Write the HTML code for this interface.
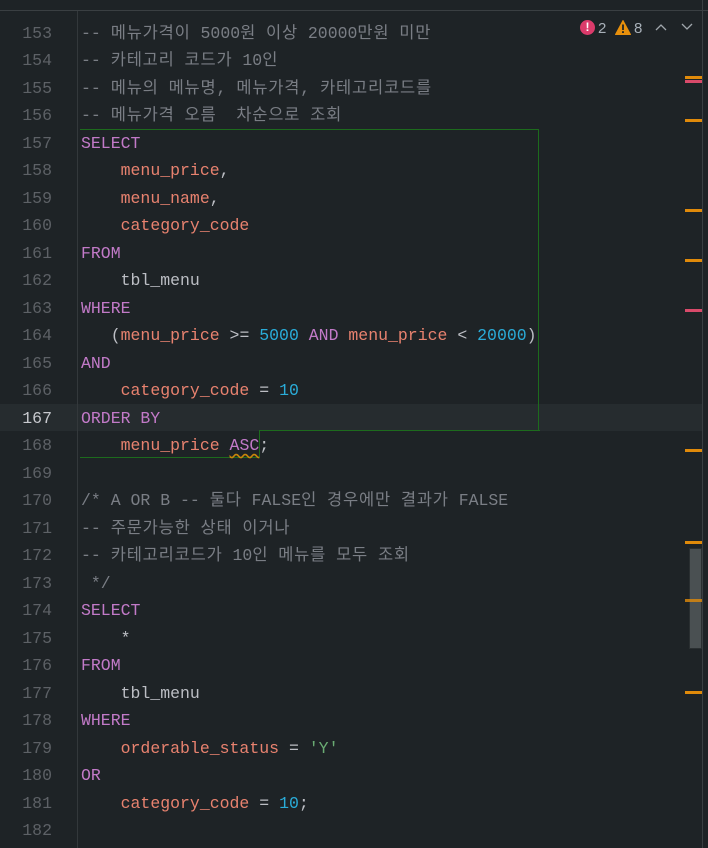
<!DOCTYPE html>
<html><head><meta charset="utf-8"><style>
body{margin:0;width:708px;height:848px;background:#1e2326;overflow:hidden;position:relative;font-family:"Liberation Mono","Noto Sans CJK KR",monospace;font-size:16.5px}
.top{position:absolute;left:0;top:0;width:708px;height:10px;border-bottom:1px solid #3a3f42;background:#1e2326}
.gut{position:absolute;left:77px;top:11px;width:1px;height:837px;background:#33383b}
.vb{position:absolute;left:702px;top:0;width:1px;height:848px;background:#3a3f42}
.ln{position:absolute;left:0;width:52px;text-align:right;color:#5d6166;height:27.5px;line-height:27.5px}
.cl{position:absolute;left:81px;height:27.5px;line-height:27.5px;white-space:pre;color:#bcbec4}
.k{letter-spacing:0.8px}
.c{color:#7a7e85}.kw{color:#c27ac8}.id{color:#e8826f}.n{color:#2aacd8}.s{color:#6aab73}.op{color:#bcbec4}
.mk{position:absolute;left:685px;width:17px;height:3px;background:#e08a0a}
</style></head><body>
<div class="top"></div>
<div style="position:absolute;left:0;top:404px;width:702px;height:27px;background:#262c2f"></div>
<div class="gut"></div>
<div class="vb"></div>
<div style="position:absolute;left:80px;top:129px;width:459px;height:301px;border:1px solid #1d6b1d;border-bottom:none;border-left:none;box-sizing:border-box"></div>
<div style="position:absolute;left:80px;top:129px;width:459px;height:1px;background:#1d6b1d"></div>
<div style="position:absolute;left:259px;top:430px;width:281px;height:1px;background:#1d6b1d"></div>
<div style="position:absolute;left:259px;top:430px;width:1px;height:27px;background:#1d6b1d"></div>
<div style="position:absolute;left:80px;top:457px;width:180px;height:1px;background:#1d6b1d"></div>

<div class="ln" style="top:19.5px">153</div><div class="cl c" style="top:19.5px">-- <span class="k">메뉴가격이</span> 5000<span class="k">원</span> <span class="k">이상</span> 20000<span class="k">만원</span> <span class="k">미만</span></div>
<div class="ln" style="top:47px">154</div><div class="cl c" style="top:47px">-- <span class="k">카테고리</span> <span class="k">코드가</span> 10<span class="k">인</span></div>
<div class="ln" style="top:74.5px">155</div><div class="cl c" style="top:74.5px">-- <span class="k">메뉴의</span> <span class="k">메뉴명</span>, <span class="k">메뉴가격</span>, <span class="k">카테고리코드를</span></div>
<div class="ln" style="top:102px">156</div><div class="cl c" style="top:102px">-- <span class="k">메뉴가격</span> <span class="k">오름</span>  <span class="k">차순으로</span> <span class="k">조회</span></div>
<div class="ln" style="top:129.5px">157</div><div class="cl kw" style="top:129.5px">SELECT</div>
<div class="ln" style="top:157px">158</div><div class="cl" style="top:157px">    <span class="id">menu_price</span>,</div>
<div class="ln" style="top:184.5px">159</div><div class="cl" style="top:184.5px">    <span class="id">menu_name</span>,</div>
<div class="ln" style="top:212px">160</div><div class="cl" style="top:212px">    <span class="id">category_code</span></div>
<div class="ln" style="top:239.5px">161</div><div class="cl kw" style="top:239.5px">FROM</div>
<div class="ln" style="top:267px">162</div><div class="cl" style="top:267px">    tbl_menu</div>
<div class="ln" style="top:294.5px">163</div><div class="cl kw" style="top:294.5px">WHERE</div>
<div class="ln" style="top:322px">164</div><div class="cl" style="top:322px">   (<span class="id">menu_price</span> &gt;= <span class="n">5000</span> <span class="kw">AND</span> <span class="id">menu_price</span> &lt; <span class="n">20000</span>)</div>
<div class="ln" style="top:349.5px">165</div><div class="cl kw" style="top:349.5px">AND</div>
<div class="ln" style="top:377px">166</div><div class="cl" style="top:377px">    <span class="id">category_code</span> = <span class="n">10</span></div>
<div class="ln" style="top:404.5px;color:#c8cacf">167</div><div class="cl kw" style="top:404.5px">ORDER BY</div>
<div class="ln" style="top:432px">168</div><div class="cl" style="top:432px">    <span class="id">menu_price</span> <span class="kw" style="text-decoration:underline wavy #c9860a;text-underline-offset:3px">ASC</span>;</div>
<div class="ln" style="top:459.5px">169</div>
<div class="ln" style="top:487px">170</div><div class="cl c" style="top:487px">/* A OR B -- <span class="k">둘다</span> FALSE<span class="k">인</span> <span class="k">경우에만</span> <span class="k">결과가</span> FALSE</div>
<div class="ln" style="top:514.5px">171</div><div class="cl c" style="top:514.5px">-- <span class="k">주문가능한</span> <span class="k">상태</span> <span class="k">이거나</span></div>
<div class="ln" style="top:542px">172</div><div class="cl c" style="top:542px">-- <span class="k">카테고리코드가</span> 10<span class="k">인</span> <span class="k">메뉴를</span> <span class="k">모두</span> <span class="k">조회</span></div>
<div class="ln" style="top:569.5px">173</div><div class="cl c" style="top:569.5px"> */</div>
<div class="ln" style="top:597px">174</div><div class="cl kw" style="top:597px">SELECT</div>
<div class="ln" style="top:624.5px">175</div><div class="cl" style="top:624.5px">    *</div>
<div class="ln" style="top:652px">176</div><div class="cl kw" style="top:652px">FROM</div>
<div class="ln" style="top:679.5px">177</div><div class="cl" style="top:679.5px">    tbl_menu</div>
<div class="ln" style="top:707px">178</div><div class="cl kw" style="top:707px">WHERE</div>
<div class="ln" style="top:734.5px">179</div><div class="cl" style="top:734.5px">    <span class="id">orderable_status</span> = <span class="s">'Y'</span></div>
<div class="ln" style="top:762px">180</div><div class="cl kw" style="top:762px">OR</div>
<div class="ln" style="top:789.5px">181</div><div class="cl" style="top:789.5px">    <span class="id">category_code</span> = <span class="n">10</span>;</div>
<div class="ln" style="top:817px">182</div>

<div style="position:absolute;left:580px;top:20px;width:15px;height:15px;border-radius:50%;background:#db3b6b;color:#fff;font:bold 12px 'Liberation Sans',sans-serif;text-align:center;line-height:15px">!</div>
<div style="position:absolute;left:598px;top:20px;color:#a8b0b8;font:15px 'Liberation Sans',sans-serif">2</div>
<svg style="position:absolute;left:615px;top:20px" width="16" height="15" viewBox="0 0 16 15"><path d="M8 0.5 L15.5 14.5 H0.5 Z" fill="#e8900c" stroke="#e8900c" stroke-linejoin="round"/><rect x="7.1" y="4.5" width="1.8" height="5.5" fill="#1e2326"/><rect x="7.1" y="11.2" width="1.8" height="1.8" fill="#1e2326"/></svg>
<div style="position:absolute;left:634px;top:20px;color:#a8b0b8;font:15px 'Liberation Sans',sans-serif">8</div>
<svg style="position:absolute;left:655px;top:23px" width="12" height="8"><path d="M1 7 L6 2 L11 7" fill="none" stroke="#a0a6ac" stroke-width="1.3"/></svg>
<svg style="position:absolute;left:681px;top:23px" width="12" height="8"><path d="M1 1 L6 6 L11 1" fill="none" stroke="#a0a6ac" stroke-width="1.3"/></svg>

<div class="mk" style="top:76px"></div>
<div class="mk" style="top:80px;background:#d94a6a"></div>
<div class="mk" style="top:119px"></div>
<div class="mk" style="top:209px"></div>
<div class="mk" style="top:259px"></div>
<div class="mk" style="top:309px;background:#d94a6a"></div>
<div class="mk" style="top:449px"></div>
<div class="mk" style="top:541px"></div>
<div style="position:absolute;left:689px;top:548px;width:11px;height:99px;background:#4a5052;border:1px solid #2a2f31"></div>
<div class="mk" style="top:599px;opacity:0.8"></div>
<div class="mk" style="top:691px"></div>
</body></html>
